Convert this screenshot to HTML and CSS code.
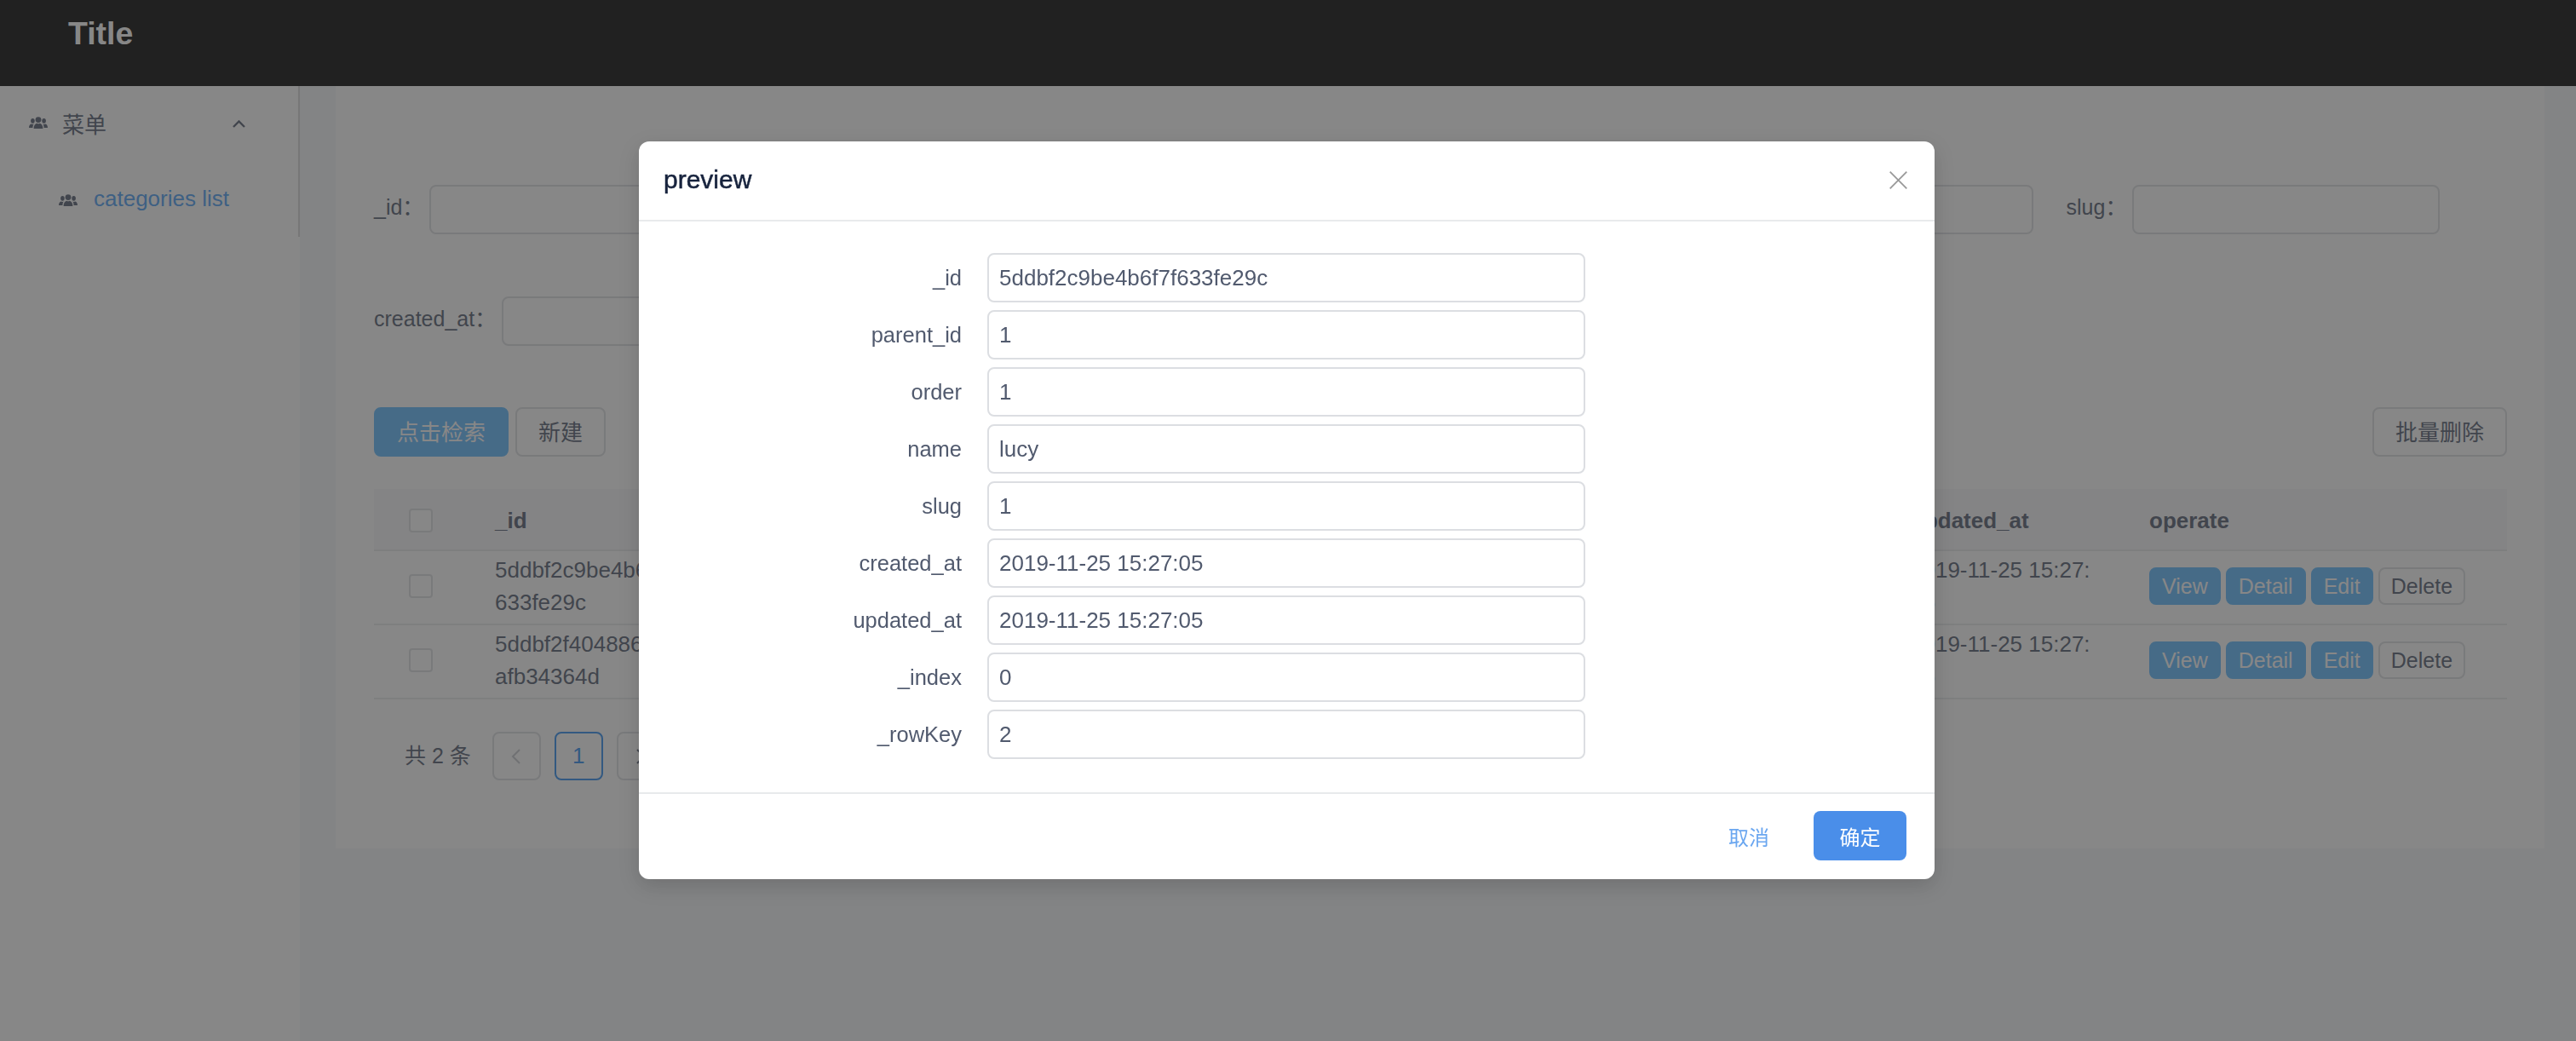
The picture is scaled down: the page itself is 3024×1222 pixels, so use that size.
FILE: index.html
```html
<!DOCTYPE html>
<html lang="en">
<head>
<meta charset="utf-8">
<title>Title</title>
<link rel="stylesheet" href="styles.css">
</head>
<body>
<svg class="defs" width="0" height="0" aria-hidden="true">
  <symbol id="people" viewBox="0 0 22 14">
    <circle cx="11" cy="3.6" r="3.4"/>
    <path d="M5.6 14c0-3.800 1.600-5.600 3.600-6.300.6.400 1.200.6 1.800.6s1.200-.2 1.800-.6c2 .7 3.600 2.500 3.600 6.300z"/>
    <ellipse cx="4.400" cy="4.800" rx="2.300" ry="2.900"/>
    <ellipse cx="17.600" cy="4.800" rx="2.300" ry="2.900"/>
    <path d="M0 13c0-2.700 1.100-4 2.600-4.600.5.300 1.100.5 1.800.5.700 0 1-.1 1.400-.3-.9.900-1.300 2.400-1.400 4.400z"/>
    <path d="M22 13c0-2.700-1.100-4-2.600-4.600-.5.300-1.100.5-1.800.5-.7 0-1-.1-1.400-.3.900.900 1.300 2.400 1.400 4.400z"/>
  </symbol>
</svg>

<header class="topbar"><h3 class="brand">Title</h3></header>

<div class="shell">
  <aside class="sider">
    <nav class="menu">
      <div class="menu-head">
        <svg class="ico-people"><use href="#people"/></svg>
        <span class="menu-title">菜单</span>
        <svg class="ico-chevron" viewBox="0 0 15 9"><path d="M1 8l6.500-6.500L14 8"/></svg>
      </div>
      <a class="menu-item">
        <svg class="ico-people"><use href="#people"/></svg>
        <span class="menu-link">categories list</span>
      </a>
    </nav>
  </aside>

  <main class="content">
    <section class="card">
      <form class="filters">
        <label class="filter"><span class="filter-name">_id：</span><span class="box"></span></label>
        <label class="filter"><span class="filter-name">parent_id：</span><span class="box"></span></label>
        <label class="filter"><span class="filter-name">order：</span><span class="box"></span></label>
        <label class="filter"><span class="filter-name">name：</span><span class="box"></span></label>
        <label class="filter"><span class="filter-name">slug：</span><span class="box"></span></label>
        <label class="filter"><span class="filter-name">created_at：</span><span class="box"></span></label>
      </form>

      <div class="toolbar">
        <button class="btn btn-primary">点击检索</button>
        <button class="btn">新建</button>
        <button class="btn btn-end">批量删除</button>
      </div>

      <table class="grid">
        <colgroup>
          <col class="c-check"><col class="c-data"><col class="c-data"><col class="c-data"><col class="c-data"><col class="c-data"><col class="c-data"><col class="c-upd"><col>
        </colgroup>
        <thead>
          <tr>
            <th><span class="check"></span></th><th>_id</th><th>parent_id</th><th>order</th><th>name</th><th>slug</th><th>created_at</th><th>updated_at</th><th>operate</th>
          </tr>
        </thead>
        <tbody>
          <tr>
            <td><span class="check"></span></td><td>5ddbf2c9be4b6f7f633fe29c</td><td>1</td><td>1</td><td>lucy</td><td>1</td><td>2019-11-25 15:27:05</td><td>2019-11-25 15:27:05</td>
            <td><div class="ops"><button class="btn btn-sm btn-primary">View</button><button class="btn btn-sm btn-primary">Detail</button><button class="btn btn-sm btn-primary">Edit</button><button class="btn btn-sm">Delete</button></div></td>
          </tr>
          <tr>
            <td><span class="check"></span></td><td>5ddbf2f40488616afb34364d</td><td>1</td><td>2</td><td>lily</td><td>2</td><td>2019-11-25 15:27:05</td><td>2019-11-25 15:27:05</td>
            <td><div class="ops"><button class="btn btn-sm btn-primary">View</button><button class="btn btn-sm btn-primary">Detail</button><button class="btn btn-sm btn-primary">Edit</button><button class="btn btn-sm">Delete</button></div></td>
          </tr>
        </tbody>
      </table>

      <div class="pager">
        <span class="pager-total">共 2 条</span>
        <span class="page page-off"><svg class="ico-page" viewBox="0 0 12 20"><path d="M10 2L2 10l8 8"/></svg></span>
        <span class="page page-on">1</span>
        <span class="page"><svg class="ico-page" viewBox="0 0 12 20"><path d="M2 2l8 8-8 8"/></svg></span>
      </div>
    </section>
  </main>
</div>

<div class="mask">
  <div class="modal">
    <div class="modal-head">
      <span class="modal-title">preview</span>
      <svg class="ico-close" viewBox="0 0 21 21"><path d="M.7.7l19.600 19.600M20.300.7L.7 20.300"/></svg>
    </div>
    <div class="modal-body">
      <label class="field"><span class="field-name">_id</span><input class="field-input" readonly value="5ddbf2c9be4b6f7f633fe29c"></label>
      <label class="field"><span class="field-name">parent_id</span><input class="field-input" readonly value="1"></label>
      <label class="field"><span class="field-name">order</span><input class="field-input" readonly value="1"></label>
      <label class="field"><span class="field-name">name</span><input class="field-input" readonly value="lucy"></label>
      <label class="field"><span class="field-name">slug</span><input class="field-input" readonly value="1"></label>
      <label class="field"><span class="field-name">created_at</span><input class="field-input" readonly value="2019-11-25 15:27:05"></label>
      <label class="field"><span class="field-name">updated_at</span><input class="field-input" readonly value="2019-11-25 15:27:05"></label>
      <label class="field"><span class="field-name">_index</span><input class="field-input" readonly value="0"></label>
      <label class="field"><span class="field-name">_rowKey</span><input class="field-input" readonly value="2"></label>
    </div>
    <div class="modal-foot">
      <button class="foot-cancel">取消</button>
      <button class="foot-ok">确定</button>
    </div>
  </div>
</div>
</body>
</html>
```

FILE: styles.css
```css
* { box-sizing: border-box; }

html, body { height: 100%; }

body {
  margin: 0;
  display: flex;
  flex-direction: column;
  overflow: hidden;
  background: #f5f7f9;
  color: #515a6e;
  font-family: "Liberation Sans", "Noto Sans CJK SC", sans-serif;
  font-size: 26px;
}

.defs { position: absolute; }

/* top bar */
.topbar {
  height: 101px;
  flex: none;
  padding: 0 80px;
  background: #000;
}

.brand {
  margin: 0;
  padding-top: 18px;
  color: #fff;
  font-size: 37.44px;
  line-height: 42px;
  font-weight: 700;
}

.shell { flex: 1; display: flex; min-height: 0; }

/* side menu */
.sider { width: 352px; flex: none; background: #fff; }

.menu { height: 177px; border-right: 2px solid #d8d8d8; }

.menu-head {
  height: 86px;
  display: flex;
  align-items: center;
  padding: 0 0 0 34px;
}

.menu-title { margin-left: 17px; width: 200px; }

.ico-people { width: 22px; height: 14px; fill: #515a6e; flex: none; }

.ico-chevron {
  width: 15px;
  height: 9px;
  fill: none;
  stroke: #515a6e;
  stroke-width: 2.400;
  margin-top: 3px;
}

.menu-item {
  height: 50px;
  margin-top: 23px;
  display: flex;
  align-items: center;
  gap: 19px;
  padding-left: 69px;
  color: #4a9df5;
}

.menu-link { margin-top: -3px; }

/* content card */
.content { flex: 1; padding: 0 37px 0 42px; min-width: 0; }

.card { height: 895px; padding: 116px 44px 0 45px; background: #fff; }

.filters {
  display: flex;
  flex-wrap: wrap;
  gap: 73px 39px;
  height: 261px;
  align-content: flex-start;
}

.filter { display: flex; align-items: center; height: 58px; }

.filter-name { margin-right: 7px; font-size: 25px; line-height: 52px; margin-top: -6px; }

.box {
  width: 361px;
  height: 58px;
  border: 2px solid #dcdee2;
  border-radius: 8px;
  background: #fff;
}

/* buttons */
.toolbar { display: flex; gap: 8px; }

.btn {
  height: 58px;
  padding: 0 25px;
  border: 2px solid #dcdee2;
  border-radius: 8px;
  background: #fff;
  color: #515a6e;
  font: inherit;
}

.toolbar .btn { padding-bottom: 3px; }

.btn-end { margin-left: auto; }

.btn-primary { border-color: #5cb8ff; background: #5cb8ff; color: #fff; }

.btn-sm { height: 44px; padding: 0 13px; font-size: 25px; line-height: 1; }

/* table */
.grid {
  width: 2504px;
  margin-top: 38px;
  border-collapse: collapse;
  table-layout: fixed;
}

.c-check { width: 114px; }
.c-data { width: 277px; }
.c-upd { width: 280px; }

.grid th, .grid td {
  padding: 0 35px 0 28px;
  border-bottom: 2px solid #e8eaec;
  text-align: left;
  word-break: break-all;
  line-height: 38px;
}

.grid th {
  height: 72px;
  padding-top: 3px;
  background: #f8f8f9;
  font-weight: 700;
}

.grid td { height: 87px; padding-bottom: 3px; }

.grid th:first-child { padding: 3px 0 0 41px; }
.grid td:first-child { padding: 0 0 3px 41px; }

.check {
  display: block;
  width: 28px;
  height: 28px;
  border: 2px solid #dcdee2;
  border-radius: 4px;
  background: #fff;
}

.ops { display: flex; gap: 6px; width: 420px; }

/* pagination */
.pager { display: flex; align-items: center; gap: 16px; margin-top: 38px; padding-left: 36px; }

.pager-total { margin-right: 9px; margin-top: -5px; font-size: 25px; }

.page {
  width: 57px;
  height: 57px;
  display: flex;
  align-items: center;
  justify-content: center;
  border: 2px solid #dcdee2;
  border-radius: 8px;
  background: #fff;
}

.page-on { border-color: #2d8cf0; color: #2d8cf0; }

.ico-page { width: 12px; height: 20px; fill: none; stroke: #515a6e; stroke-width: 2; }

.page-off .ico-page { stroke: #c5c8ce; }

/* modal */
.mask {
  position: fixed;
  inset: 0;
  padding: 166px 0 0 750px;
  background: rgba(55, 55, 55, .6);
}

.modal {
  width: 1521px;
  height: 866px;
  border-radius: 12px;
  background: #fff;
  box-shadow: 0 8px 24px rgba(0, 0, 0, .15);
  display: flex;
  flex-direction: column;
}

.modal-head {
  height: 94px;
  flex: none;
  display: flex;
  align-items: center;
  justify-content: space-between;
  padding: 0 32px 0 29px;
  border-bottom: 2px solid #e8eaec;
}

.modal-title {
  color: #17233d;
  font-size: 30px;
  -webkit-text-stroke: .5px #17233d;
  margin-top: -2px;
}

.ico-close { width: 21px; height: 21px; fill: none; stroke: #999; stroke-width: 1.800; margin-top: -2px; }

.modal-body {
  flex: 1;
  display: flex;
  flex-direction: column;
  gap: 9px;
  padding-top: 37px;
}

.field { display: flex; align-items: center; gap: 30px; height: 58px; }

.field-name { width: 379px; font-size: 25.500px; text-align: right; }

.field-input {
  width: 702px;
  height: 58px;
  padding: 0 12px;
  border: 2px solid #dcdee2;
  border-radius: 8px;
  background: #fff;
  color: #515a6e;
  font: inherit;
  outline: 0;
}

.modal-foot {
  height: 102px;
  flex: none;
  display: flex;
  justify-content: flex-end;
  align-items: center;
  gap: 52px;
  padding: 0 33px 2px 0;
  border-top: 2px solid #e8eaec;
}

.foot-cancel, .foot-ok { font: inherit; font-size: 24px; border: 0; }

.foot-cancel { padding: 0; background: none; color: #6ba7f0; }

.foot-ok {
  width: 109px;
  height: 58px;
  border-radius: 8px;
  background: #4a8ee9;
  color: #fff;
}
```
